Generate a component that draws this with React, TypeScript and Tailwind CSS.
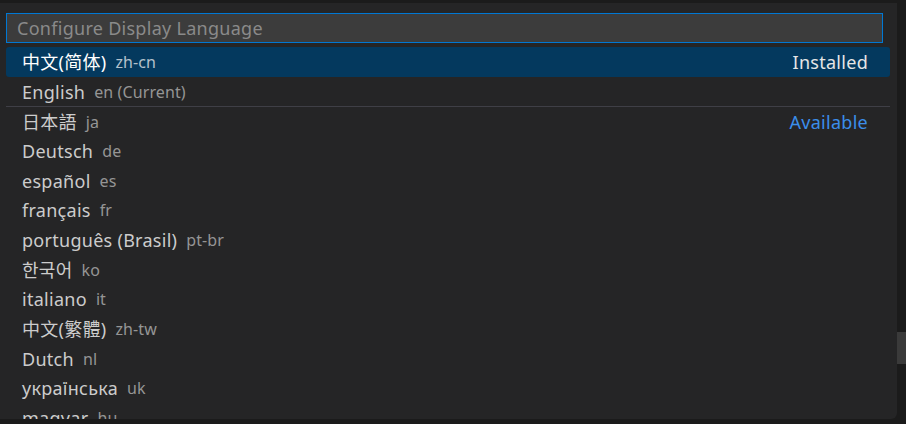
import React from 'react';

type Lang = { label: string; code: string; group?: string; sep?: boolean };

const langs: Lang[] = [
  { label: '中文(简体)', code: 'zh-cn', group: 'Installed' },
  { label: 'English', code: 'en (Current)' },
  { label: '日本語', code: 'ja', group: 'Available', sep: true },
  { label: 'Deutsch', code: 'de' },
  { label: 'español', code: 'es' },
  { label: 'français', code: 'fr' },
  { label: 'português (Brasil)', code: 'pt-br' },
  { label: '한국어', code: 'ko' },
  { label: 'italiano', code: 'it' },
  { label: '中文(繁體)', code: 'zh-tw' },
  { label: 'Dutch', code: 'nl' },
  { label: 'українська', code: 'uk' },
  { label: 'magyar', code: 'hu' },
];

const font = {
  fontFamily: '"Noto Sans", "Noto Sans CJK SC", "Noto Sans CJK KR", sans-serif',
};

export default function App() {
  return (
    <div className="w-[906px] h-[424px] bg-[#1b1b1b] overflow-hidden flex" style={font}>
      {/* quick pick panel */}
      <div className="mt-[3px] w-[897px] h-[416px] bg-[#252526] rounded-br-[6px] overflow-hidden flex flex-col shrink-0">
        <div className="ml-[6px] mt-[10px] w-[877px] h-[30px] shrink-0 bg-[#3c3c3c] border border-[#0078d4] flex items-center pl-[10px]">
          <span className="text-[18px] tracking-[0.28px] text-[#8a8a8a] leading-none">Configure Display Language</span>
        </div>

        <div className="mt-[4px] flex flex-col shrink-0">
          {langs.map((l, i) => {
            const selected = i === 0;
            return (
              <div
                key={l.code}
                className={`ml-[6px] w-[884px] h-[29.7px] shrink-0 flex items-center pl-[16px] pr-[22px] rounded-[3px] ${
                  selected ? 'bg-[#04395e]' : ''
                } ${l.sep ? 'border-t border-[#3f3f46] rounded-none' : ''}`}
              >
                <span
                  className={`text-[18px] tracking-[0.28px] leading-none ${selected ? 'text-white' : 'text-[#cccccc]'}`}
                >
                  {l.label}
                </span>
                <span
                  className={`ml-[9px] text-[16px] tracking-[0.1px] leading-none ${
                    selected ? 'text-[#b4c1cc]' : 'text-[#959595]'
                  }`}
                >
                  {l.code}
                </span>
                {l.group && (
                  <span
                    className={`ml-auto text-[18px] tracking-[0.28px] leading-none ${
                      selected ? 'text-[#e6e6e6]' : 'text-[#3b8eea]'
                    }`}
                  >
                    {l.group}
                  </span>
                )}
              </div>
            );
          })}
        </div>
      </div>

      {/* editor scrollbar behind the panel */}
      <div className="flex-1 flex flex-col">
        <div className="mt-[332px] h-[32px] w-full bg-[#3a3a3a]" />
      </div>
    </div>
  );
}
